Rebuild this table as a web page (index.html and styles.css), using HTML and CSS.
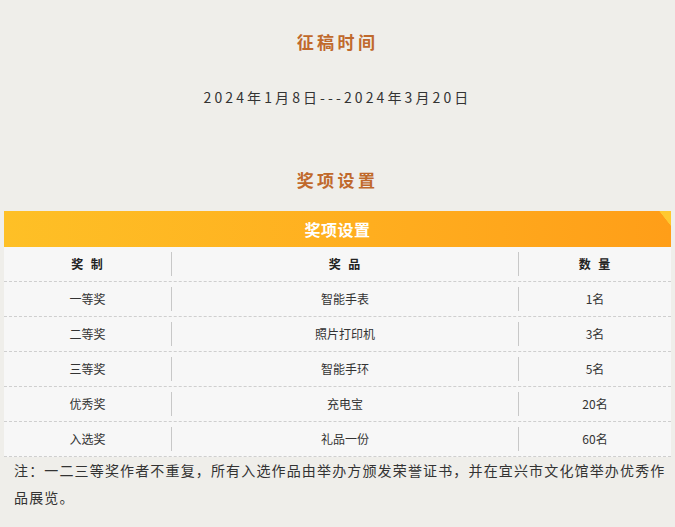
FILE: index.html
```html
<!DOCTYPE html>
<html lang="zh-CN">
<head>
<meta charset="utf-8">
<link rel="stylesheet" href="styles.css">
</head>
<body>
<div class="page">
  <h2 class="title title-first">征稿时间</h2>
  <p class="date">2024年1月8日---2024年3月20日</p>
  <h2 class="title title-second">奖项设置</h2>
  <div class="table">
    <div class="banner">奖项设置</div>
    <div class="row head">
      <div class="cell">奖 制</div>
      <div class="cell sep">奖 品</div>
      <div class="cell sep">数 量</div>
    </div>
    <div class="row">
      <div class="cell">一等奖</div>
      <div class="cell sep">智能手表</div>
      <div class="cell sep">1名</div>
    </div>
    <div class="row">
      <div class="cell">二等奖</div>
      <div class="cell sep">照片打印机</div>
      <div class="cell sep">3名</div>
    </div>
    <div class="row">
      <div class="cell">三等奖</div>
      <div class="cell sep">智能手环</div>
      <div class="cell sep">5名</div>
    </div>
    <div class="row">
      <div class="cell">优秀奖</div>
      <div class="cell sep">充电宝</div>
      <div class="cell sep">20名</div>
    </div>
    <div class="row">
      <div class="cell">入选奖</div>
      <div class="cell sep">礼品一份</div>
      <div class="cell sep">60名</div>
    </div>
  </div>
  <p class="note">注：一二三等奖作者不重复，所有入选作品由举办方颁发荣誉证书，并在宜兴市文化馆举办优秀作品展览。</p>
</div>
</body>
</html>
```
FILE: styles.css
```css
* { box-sizing: border-box; }
html, body {
  margin: 0;
  padding: 0;
  background: #efeeea;
}
body {
  font-family: "Noto Sans CJK SC", "Noto Sans", sans-serif;
  color: #333;
}
.page {
  width: 675px;
  padding: 30px 4px 0 4px;
}
.title {
  margin: 0;
  text-align: center;
  font-size: 17px;
  line-height: 24px;
  font-weight: bold;
  color: #c0692c;
  letter-spacing: 3.4px;
}
.title-second {
  margin-top: 59px;
}
.date {
  margin: 31px 0 0 0;
  text-align: center;
  font-size: 14px;
  line-height: 24px;
  letter-spacing: 3.1px;
  color: #333;
}
.table {
  margin-top: 19px;
  width: 667px;
  background: #f7f7f7;
}
.banner {
  height: 36px;
  line-height: 36px;
  text-align: center;
  color: #fff;
  font-weight: bold;
  font-size: 16px;
  letter-spacing: 0.5px;
  background:
    linear-gradient(232deg, #ffc930 0, #ffc930 9px, transparent 9.5px) no-repeat,
    linear-gradient(90deg, #fec026 0%, #ffae1f 55%, #ff9e18 100%);
}
.row {
  display: grid;
  grid-template-columns: 167px 347px 153px;
  height: 35px;
  border-bottom: 1px dashed #cfcfcf;
  align-items: center;
}
.cell {
  height: 24px;
  line-height: 24px;
  text-align: center;
  font-size: 12px;
  color: #333;
}
.sep {
  border-left: 1px solid #c8c8c8;
}
.head .cell {
  font-weight: bold;
  color: #222;
  letter-spacing: 1px;
  word-spacing: 3px;
}
.note {
  margin: 0;
  padding: 0 0 0 10px;
  font-size: 14px;
  letter-spacing: 1.15px;
  line-height: 27px;
  color: #333;
}
```
